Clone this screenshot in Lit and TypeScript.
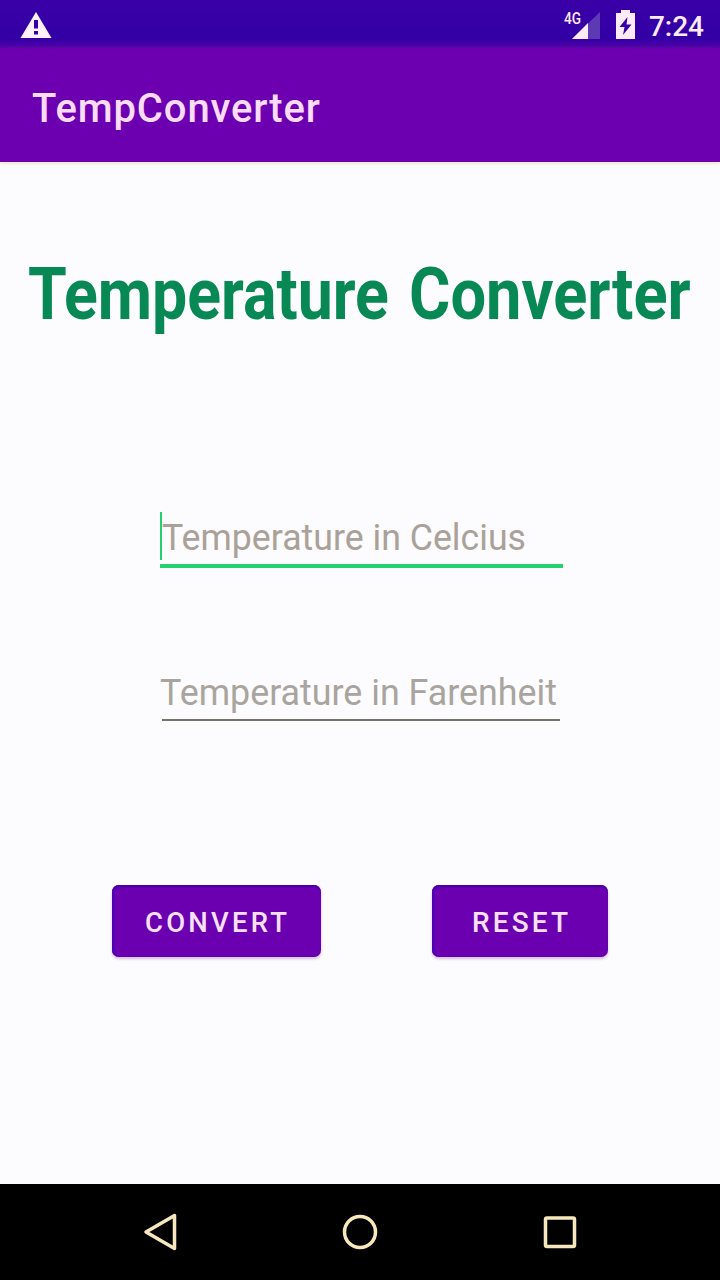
import { LitElement, html, css } from "lit";
import { customElement } from "lit/decorators.js";

@customElement("app-root")
export class AppRoot extends LitElement {
  static styles = css`
    :host { display: flex; flex-direction: column; width: 720px; height: 1280px; box-sizing: border-box; background: #fcfcfe; font-family: Roboto, sans-serif; }
    svg { display: block; overflow: visible; }
    svg, text { font-family: Roboto, sans-serif; }
    .status { flex: none; height: 48px; background: linear-gradient(#3a00a8 0, #3200a4 80%, #5400ac); }
    .appbar { flex: none; height: 114px; box-sizing: border-box; padding-left: 32px; padding-top: 6px; display: flex; align-items: center; background: #6c00b0; box-shadow: 0 1px 4px #c0902040; }
    .name { font-size: 40px; font-weight: 500; }
    main { flex: 1; display: flex; flex-direction: column; align-items: center; }
    .full { width: 720px; }
    h1 { margin: 82px 0 0; height: 100px; }
    .fields { margin-top: 160px; width: 403px; padding-left: 3px; display: flex; flex-direction: column; }
    .field { height: 64px; box-sizing: border-box; border-bottom: 4px solid #25d070; }
    .second { margin-top: 90px; height: 63px; width: 398px; margin-left: 2px; border-bottom: 2px solid #777068; }
    .buttons { display: flex; gap: 111px; margin-top: 164px; }
    button { border: 0; padding: 0; height: 72px; border-radius: 7px; background: #6a00b0; box-shadow: inset 0 2px 1px #4800a8, inset 2px 0 2px #4800b8, 0 2px 3px #a060b066; }
    .convert { width: 209px; }
    .reset { width: 176px; }
    nav { flex: none; height: 96px; background: #000; }
  `;

  render() {
    return html`
      <div class="status">
        <svg width="720" height="48" viewBox="0 0 720 48">
          <path d="M36 12L51.500 38H20.500Z" fill="#fcf0fa" />
          <path d="M34 20h4v8.500h-4zM34 31h4v3.500h-4z" fill="#3500a8" />
          <text x="564" y="23.500" font-size="16" font-weight="500" fill="#fce8f8" textLength="17" lengthAdjust="spacingAndGlyphs">4G</text>
          <path d="M572 39L600 12V39Z" fill="#5c3ab4" />
          <path d="M572 39L588 23V39Z" fill="#fcecfa" />
          <path d="M616 13h5v-3h9v3h5v26h-19z" fill="#fcecfa" />
          <path d="M627.500 17L619.500 27H624.500L623 35L631.500 24.500H626.500Z" fill="#3500a8" />
          <text x="649" y="36" font-size="28" font-weight="500" fill="#fcecf8" textLength="55">7:24</text>
        </svg>
      </div>
      <header class="appbar">
        <svg width="300" height="60" viewBox="0 0 300 60"><text class="name" x="0" y="44" fill="#fcdcf8" textLength="288">TempConverter</text></svg>
      </header>
      <main>
        <h1><svg class="full" height="100" viewBox="0 0 720 100" font-size="71.500" font-weight="700" fill="#078855">
          <text transform="translate(28 75) scale(.9 1)" textLength="401" lengthAdjust="spacingAndGlyphs">Temperature</text>
          <text transform="translate(409 75) scale(.9 1)" textLength="313" lengthAdjust="spacingAndGlyphs">Converter</text>
        </svg></h1>
        <div class="fields">
          <div class="field">
            <svg width="402" height="60" viewBox="0 0 402 60"><path d="M1 8V56" stroke="#25d070" stroke-width="2" /><text x="2" y="46" font-size="36" fill="#aaa198" textLength="364" lengthAdjust="spacingAndGlyphs">Temperature in Celcius</text></svg>
          </div>
          <div class="field second">
            <svg width="398" height="60" viewBox="0 0 398 60"><text x="-2" y="47" font-size="36" fill="#aaa49e" textLength="397" lengthAdjust="spacingAndGlyphs">Temperature in Farenheit</text></svg>
          </div>
        </div>
        <div class="buttons">
          <button class="convert"><svg width="209" height="72" viewBox="0 0 209 72"><text x="33" y="47" font-size="28" font-weight="500" fill="#fce0f6" textLength="145" letter-spacing="0" transform="translate(33 0) scale(.98 1) translate(-33 0)">CONVERT</text></svg></button>
          <button class="reset"><svg width="176" height="72" viewBox="0 0 176 72"><text x="40" y="47" font-size="28" font-weight="500" fill="#fce0f6" textLength="96">RESET</text></svg></button>
        </div>
      </main>
      <nav>
        <svg width="720" height="96" viewBox="0 0 720 96" fill="none" stroke="#f6e8bc" stroke-width="3.500" stroke-linejoin="round">
          <path d="M146 48L174.500 31.500V64.500Z" />
          <circle cx="360" cy="48" r="15.500" />
          <rect x="545.500" y="34" width="29" height="28.500" rx="1.500" />
        </svg>
      </nav>
    `;
  }
}
